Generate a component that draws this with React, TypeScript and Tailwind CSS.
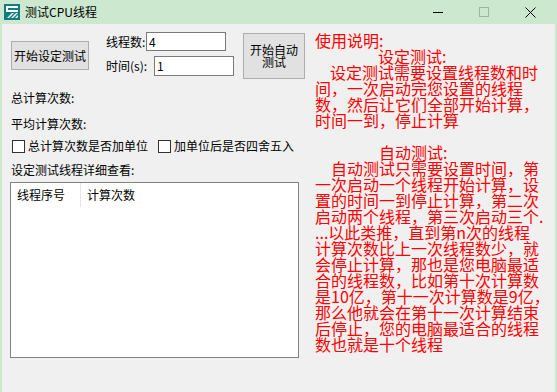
import React from 'react';

const cjk = { fontFamily: '"Noto Sans CJK SC", "Liberation Sans", sans-serif' };

const helpLines: { text: string; indent?: string }[] = [
  { text: '使用说明:' },
  { text: '设定测试:', indent: 'pl-[63px]' },
  { text: '设定测试需要设置线程数和时', indent: 'pl-[15px]' },
  { text: '间，一次启动完您设置的线程' },
  { text: '数，然后让它们全部开始计算，' },
  { text: '时间一到，停止计算' },
  { text: '\u00a0' },
  { text: '自动测试:', indent: 'pl-[64px]' },
  { text: '自动测试只需要设置时间，第', indent: 'pl-[16px]' },
  { text: '一次启动一个线程开始计算，设' },
  { text: '置的时间一到停止计算，第二次' },
  { text: '启动两个线程，第三次启动三个.' },
  { text: '...以此类推，直到第n次的线程' },
  { text: '计算次数比上一次线程数少，就' },
  { text: '会停止计算，那也是您电脑最适' },
  { text: '合的线程数，比如第十次计算数' },
  { text: '是10亿，第十一次计算数是9亿，' },
  { text: '那么他就会在第十一次计算结束' },
  { text: '后停止，您的电脑最适合的线程' },
  { text: '数也就是十个线程' },
];

function AppIcon() {
  return (
    <svg width="16" height="16" viewBox="0 0 16 16">
      <rect x="0" y="0" width="16" height="16" fill="#0f7d84" />
      <rect x="2" y="2" width="12" height="2" fill="#fff" />
      <rect x="2" y="2" width="2" height="6" fill="#fff" />
      <rect x="2" y="6" width="12" height="2" fill="#fff" />
      <path d="M3 14 L8 9 L10 9 L5 14 Z" fill="#fff" />
      <path d="M7 14 L12 9 L14 9 L9 14 Z" fill="#fff" />
      <path d="M11 14 L14 11 L14 13 L13 14 Z" fill="#fff" />
    </svg>
  );
}

function Checkbox({ label }: { label: string }) {
  return (
    <label className="flex items-center gap-[3px]">
      <span className="w-[13px] h-[13px] border border-[#333] bg-white" />
      <span>{label}</span>
    </label>
  );
}

export default function App() {
  return (
    <div
      className="w-[557px] h-[392px] bg-[#f0f0f0] border-x-2 border-[#cce8cf] flex flex-col text-black text-[12px] leading-[16px] overflow-hidden"
      style={cjk}
    >
      {/* Title bar */}
      <div className="h-[24px] bg-[#cce8cf] flex items-center shrink-0 -mx-[2px] px-[4px]">
        <AppIcon />
        <span className="ml-[5px] text-[12px]">测试CPU线程</span>
        <div className="ml-auto flex items-center h-full">
          <div className="w-[46px] flex justify-center">
            <div className="w-[10px] h-px bg-black mt-[1px]" />
          </div>
          <div className="w-[46px] flex justify-center">
            <div className="w-[10px] h-[10px] border border-[#9fb5a2]" />
          </div>
          <div className="w-[46px] flex justify-center">
            <svg width="11" height="11" viewBox="0 0 11 11">
              <path d="M0.5 0.5 L10.5 10.5 M10.5 0.5 L0.5 10.5" stroke="#000" strokeWidth="1" />
            </svg>
          </div>
        </div>
      </div>

      <div className="flex flex-1">
        {/* Left panel */}
        <div className="w-[311px] pl-[8px] flex flex-col">
          <div className="flex items-start pt-[8px] pl-[1px]">
            <button className="mt-[9px] w-[78px] h-[29px] bg-[#e1e1e1] border border-[#adadad] text-[12px]">
              开始设定测试
            </button>
            <div className="ml-[17px] flex flex-col">
              <div className="flex items-center">
                <span className="w-[40px]">线程数:</span>
                <div className="w-[80px] h-[19px] bg-white border border-[#7a7a7a] pl-[2px] leading-[17px]">4</div>
              </div>
              <div className="flex items-center mt-[5px]">
                <span className="w-[48px]">时间(s):</span>
                <div className="w-[80px] h-[20px] bg-white border border-[#7a7a7a] pl-[2px] leading-[18px]">1</div>
              </div>
            </div>
            <button className="ml-[9px] mt-[1px] w-[62px] h-[46px] bg-[#e1e1e1] border border-[#adadad] text-[12px] leading-[12px] flex flex-col items-center justify-center">
              <span>开始自动</span>
              <span>测试</span>
            </button>
          </div>

          <div className="mt-[11px] pl-[1px]">总计算次数:</div>
          <div className="mt-[10px] pl-[1px]">平均计算次数:</div>
          <div className="mt-[6px] flex items-center gap-[10px] pl-[2px]">
            <Checkbox label="总计算次数是否加单位" />
            <Checkbox label="加单位后是否四舍五入" />
          </div>
          <div className="mt-[8px] pl-[1px]">设定测试线程详细查看:</div>

          <div className="mt-[4px] w-[289px] h-[176px] bg-white border border-[#828282] ml-[0px]">
            <div className="flex h-[24px] items-center">
              <span className="w-[69px] pl-[6px]">线程序号</span>
              <span className="w-px h-full bg-[#e5e5e5]" />
              <span className="pl-[6px]">计算次数</span>
            </div>
          </div>
        </div>

        {/* Right help text */}
        <div className="pt-[8px] pl-[2px] text-[16px] leading-[16px] text-[#ff0000] whitespace-pre">
          {helpLines.map((l, i) => (
            <div key={i} className={l.indent ?? ''}>
              {l.text}
            </div>
          ))}
        </div>
      </div>
    </div>
  );
}
